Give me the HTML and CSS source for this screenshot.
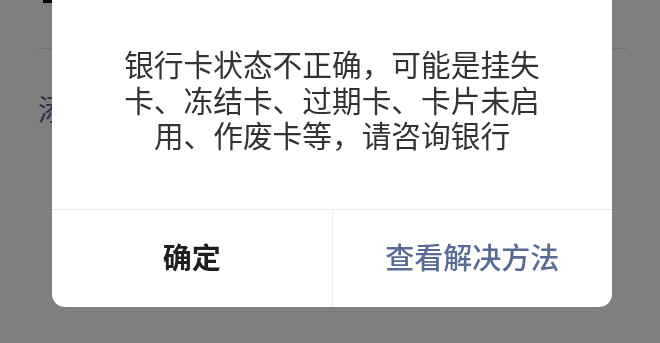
FILE: index.html
```html
<!DOCTYPE html>
<html lang="zh-CN">
<head>
<meta charset="utf-8">
<title>银行卡状态</title>
<link rel="stylesheet" href="styles.css">
</head>
<body>
<div class="page">
  <div class="page-head"><div class="head-mark"></div></div>
  <div class="page-link">添加</div>
</div>
<div class="overlay"></div>
<div class="dialog">
  <div class="dialog-body">银行卡状态不正确，可能是挂失卡、冻结卡、过期卡、卡片未启用、作废卡等，请咨询银行</div>
  <div class="dialog-foot">
    <div class="btn btn-default">确定</div>
    <div class="btn btn-primary">查看解决方法</div>
  </div>
</div>
</body>
</html>
```

FILE: styles.css
```css
html, body {
  margin: 0;
  padding: 0;
  width: 660px;
  height: 343px;
  overflow: hidden;
  background: #ffffff;
  font-family: "Noto Sans CJK SC", "Noto Sans", sans-serif;
}

.page {
  padding: 0 33px 0 38px;
}

.page-head {
  height: 48px;
  border-bottom: 1px solid #e4e4e4;
}

.head-mark {
  margin-left: 5px;
  width: 12px;
  height: 3px;
  background: #111111;
}

.page-link {
  margin-top: 41px;
  font-size: 29px;
  line-height: 36px;
  color: #5a6a9a;
}

.overlay {
  position: fixed;
  inset: 0;
  background: rgba(0, 0, 0, 0.5);
}

.dialog {
  position: absolute;
  top: -30px;
  left: 52px;
  width: 560px;
  background: #ffffff;
  border-radius: 0 0 13px 13px;
  overflow: hidden;
}

.dialog-body {
  padding: 76px 58px 56px;
  font-size: 29.7px;
  line-height: 35.5px;
  color: #333333;
  text-align: center;
}

.dialog-foot {
  display: flex;
  height: 97px;
  border-top: 1px solid #e8e8e8;
}

.btn {
  flex: 1;
  display: flex;
  align-items: center;
  justify-content: center;
  font-size: 29px;
  padding-bottom: 4px;
}

.btn-default {
  color: #1f1f1f;
  font-weight: 700;
  border-right: 1px solid #ececec;
}

.btn-primary {
  color: #576b95;
  font-weight: 500;
}
```
